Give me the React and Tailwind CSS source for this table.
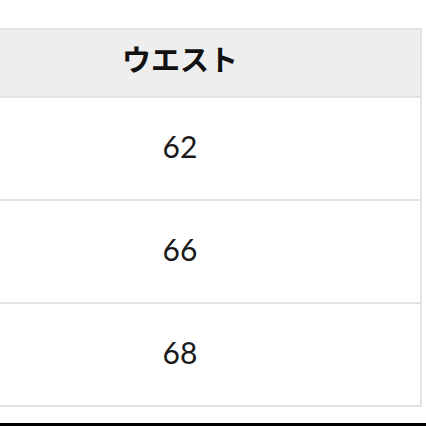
export default function App() {
  const rows = ['62', '66', '68'];
  return (
    <div className="w-[426px] h-[426px] bg-white overflow-hidden flex flex-col pt-[28px]">
      <div className="ml-[-62px] w-[484px] border-2 border-[#e2e2e2]">
        <div className="h-[66px] bg-[#eeeeee] flex items-center justify-center text-[29px] font-bold text-[#111] font-['Noto_Sans_CJK_JP',sans-serif] pb-[8px]">
          ウエスト
        </div>
        {rows.map((v) => (
          <div
            key={v}
            className="h-[103px] border-t-2 border-[#e2e2e2] flex items-center justify-center text-[30px] text-[#1a1a1a] font-['Lato',sans-serif] pb-[4px]"
          >
            {v}
          </div>
        ))}
      </div>
      <div className="mt-auto h-[3px] bg-black" />
    </div>
  );
}
